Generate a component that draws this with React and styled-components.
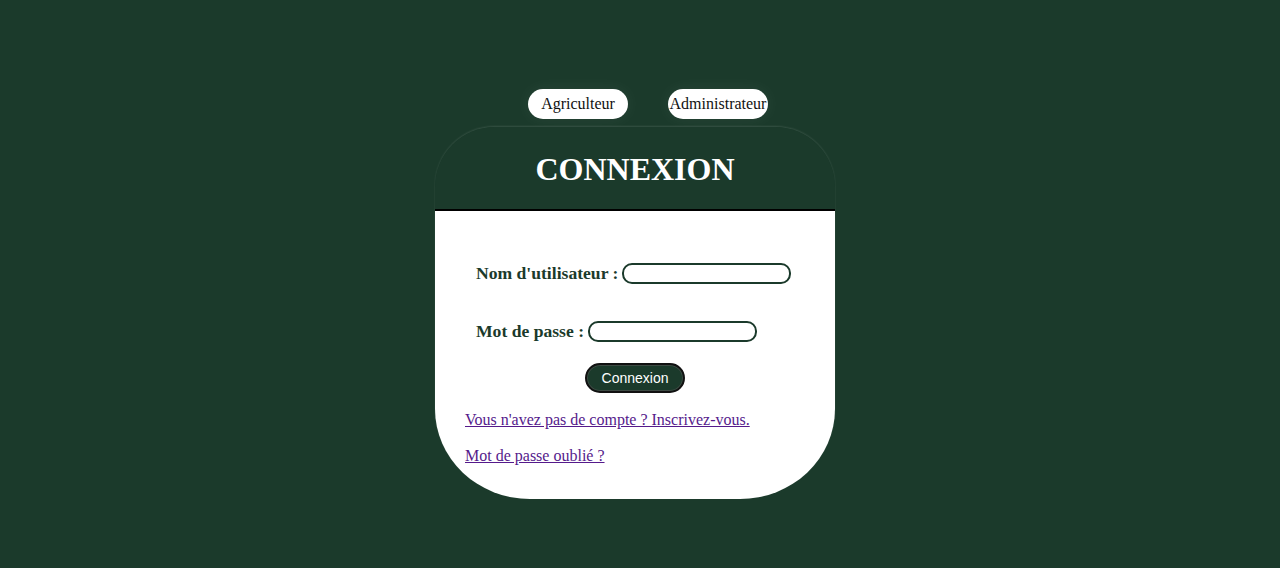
import React from "react";
import styled, { createGlobalStyle } from "styled-components";

const green = "#1b3a2b";

const Global = createGlobalStyle`
  html, body { margin: 0; padding: 0; }
  body {
    background: ${green};
    font-family: "Liberation Serif", "Times New Roman", serif;
    min-height: 568px;
  }
`;

const Page = styled.main`
  display: flex;
  flex-direction: column;
  align-items: center;
  padding-top: 89px;
`;

const Tabs = styled.nav`
  display: flex;
  gap: 40px;
  margin-bottom: 8px;
  margin-left: 16px;
`;

const TabButton = styled.button`
  width: 100px;
  height: 30px;
  padding: 0;
  border: none;
  border-radius: 15px;
  background: #ffffff;
  color: #111;
  font-family: "Liberation Serif", "Times New Roman", serif;
  font-size: 16px;
  white-space: nowrap;
  box-shadow: 0 0 18px rgba(255, 255, 255, 0.06);
  cursor: pointer;
`;

const Card = styled.section`
  width: 400px;
  margin-right: 10px;
  border-radius: 60px 60px 95px 95px / 60px 60px 90px 90px;
  overflow: hidden;
  box-shadow: 0 -1px 2px rgba(255, 255, 255, 0.12);
`;

const Header = styled.header`
  height: 82px;
  display: flex;
  align-items: center;
  justify-content: center;
  background: ${green};
  border-bottom: 2px solid #000;
`;

const Title = styled.h1`
  margin: 0;
  padding-top: 2px;
  color: #ffffff;
  font-size: 32px;
  font-weight: bold;
`;

const Body = styled.form`
  background: #ffffff;
  height: 288px;
  box-sizing: border-box;
  padding: 52px 30px 0;
  display: flex;
  flex-direction: column;
`;

const Row = styled.div`
  display: flex;
  align-items: center;
  padding-left: 11px;
  margin-bottom: ${(p) => p.$gap}px;
`;

const Label = styled.label`
  color: ${green};
  font-weight: bold;
  font-size: 17.6px;
  margin-right: 4px;
  white-space: nowrap;
`;

const Input = styled.input`
  width: 169px;
  height: 21px;
  box-sizing: border-box;
  border: 2px solid ${green};
  border-radius: 10px;
  padding: 0 6px;
  outline: none;
  background: #fff;
`;

const SubmitButton = styled.button`
  align-self: center;
  width: 100px;
  height: 30px;
  border-radius: 15px;
  background: ${green};
  color: #ffffff;
  font-family: "Liberation Sans", Arial, sans-serif;
  font-size: 14px;
  border: 2px solid #111;
  box-shadow: inset 0 0 0 1px #3d4a43;
  margin-bottom: 18px;
  cursor: pointer;
`;

const LinkText = styled.a`
  color: #551a8b;
  font-size: 16px;
  text-decoration: underline;
  line-height: 18px;
  margin-bottom: 18px;
  align-self: flex-start;
`;

export default function App() {
  return (
    <>
      <Global />
      <Page>
        <Tabs>
          <TabButton type="button">Agriculteur</TabButton>
          <TabButton type="button">Administrateur</TabButton>
        </Tabs>
        <Card>
          <Header>
            <Title>CONNEXION</Title>
          </Header>
          <Body onSubmit={(e) => e.preventDefault()}>
            <Row $gap={37}>
              <Label htmlFor="user">Nom d'utilisateur :</Label>
              <Input id="user" type="text" />
            </Row>
            <Row $gap={21}>
              <Label htmlFor="pass">Mot de passe :</Label>
              <Input id="pass" type="password" />
            </Row>
            <SubmitButton type="submit">Connexion</SubmitButton>
            <LinkText href="#inscription">Vous n'avez pas de compte ? Inscrivez-vous.</LinkText>
            <LinkText href="#oubli">Mot de passe oublié ?</LinkText>
          </Body>
        </Card>
      </Page>
    </>
  );
}
